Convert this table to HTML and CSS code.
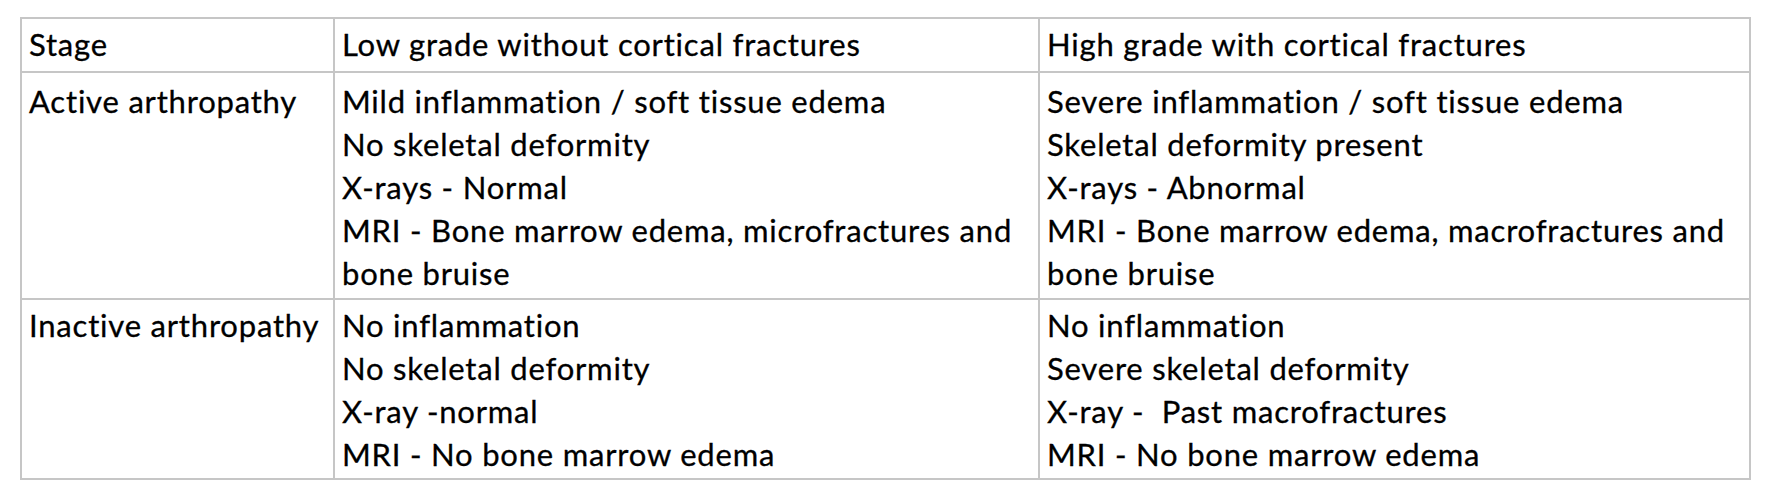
FILE: index.html
```html
<!DOCTYPE html>
<html>
<head>
<meta charset="utf-8">
<link rel="stylesheet" href="styles.css">
</head>
<body>
<div class="page">
  <div class="grid">
    <div class="cell">Stage</div>
    <div class="cell">Low grade without cortical fractures</div>
    <div class="cell">High grade with cortical fractures</div>

    <div class="cell row1">Active arthropathy</div>
    <div class="cell row1">
      <div>Mild inflammation / soft tissue edema</div>
      <div>No skeletal deformity</div>
      <div>X-rays - Normal</div>
      <div>MRI - Bone marrow edema, microfractures and<br>bone bruise</div>
    </div>
    <div class="cell row1">
      <div>Severe inflammation / soft tissue edema</div>
      <div>Skeletal deformity present</div>
      <div>X-rays - Abnormal</div>
      <div>MRI - Bone marrow edema, macrofractures and<br>bone bruise</div>
    </div>

    <div class="cell">Inactive arthropathy</div>
    <div class="cell">
      <div>No inflammation</div>
      <div>No skeletal deformity</div>
      <div>X-ray -normal</div>
      <div>MRI - No bone marrow edema</div>
    </div>
    <div class="cell">
      <div>No inflammation</div>
      <div>Severe skeletal deformity</div>
      <div>X-ray -&nbsp; Past macrofractures</div>
      <div>MRI - No bone marrow edema</div>
    </div>
  </div>
</div>
</body>
</html>
```

FILE: styles.css
```css
html, body {
  margin: 0;
  padding: 0;
  background: #ffffff;
}

.page {
  padding: 17px 0 0 20px;
}

.grid {
  display: grid;
  width: 1731px;
  box-sizing: border-box;
  grid-template-columns: 313px 705px 711px;
  grid-template-rows: 54px 227px 180px;
  border-top: 2px solid #c6c6c6;
  border-left: 2px solid #c6c6c6;
  font-family: "Lato", "Liberation Sans", sans-serif;
  font-size: 31px;
  letter-spacing: 0.8px;
  line-height: 43px;
  color: #000000;
  -webkit-text-stroke: 0.3px #000000;
}

.cell {
  border-right: 2px solid #c6c6c6;
  border-bottom: 2px solid #c6c6c6;
  padding: 4px 7px 0 7px;
  box-sizing: border-box;
  white-space: nowrap;
}

.row1 {
  padding-top: 7px;
}
```
